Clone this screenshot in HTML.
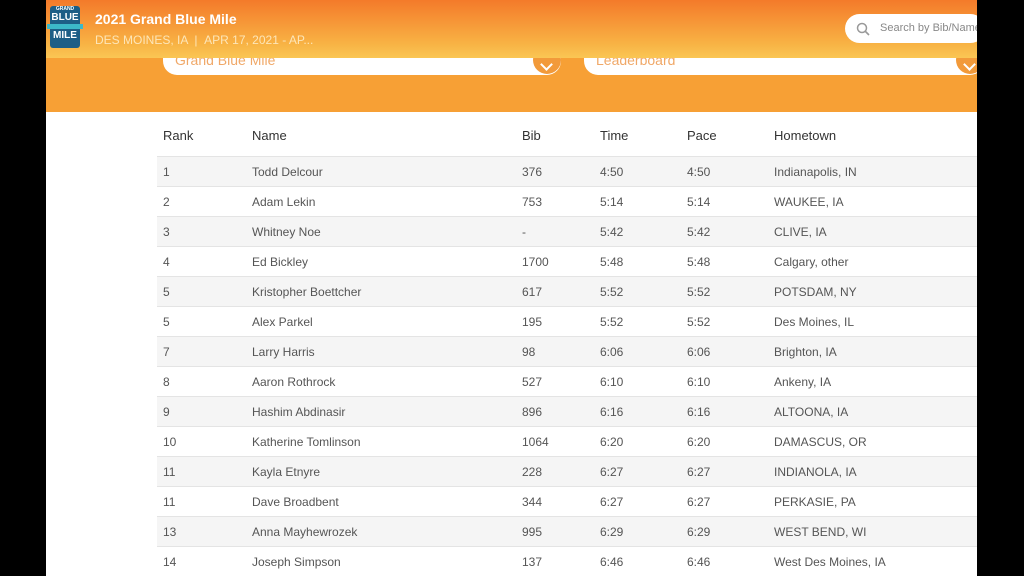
<!DOCTYPE html>
<html><head><meta charset="utf-8"><style>
body{margin:0;width:1024px;height:576px;background:#000;overflow:hidden;font-family:"Liberation Sans",sans-serif;position:relative}
.page{position:absolute;left:46px;top:0;width:931px;height:576px;background:#fff;overflow:hidden}
.band{position:absolute;left:0;top:0;width:931px;height:112px;background:#f7a035}
.hdr{position:absolute;left:0;top:0;width:931px;height:58px;background:linear-gradient(#f47a2a,#f8b244 75%,#fac654)}
.dd{position:absolute;top:40px;height:35px;background:#fff;border-radius:14px;color:#f0a868;font-size:14px}
.dd span{position:absolute;left:12px;top:12px}
.dd i{position:absolute;right:0;top:6px;width:28px;height:28px;border-radius:50%;background:#f29a3a}
.dd i:after{content:"";position:absolute;left:9px;top:14px;width:7px;height:7px;border-right:2px solid #fff;border-bottom:2px solid #fff;transform:rotate(45deg)}
.logo{position:absolute;left:4px;top:6px;width:30px;height:42px;background:#1d5e86;border-radius:3px;color:#fff;font-weight:bold;font-size:10px;text-align:center;line-height:11px}
.title{position:absolute;left:49px;top:11px;color:#fff;font-size:14px;font-weight:bold}
.sub{position:absolute;left:49px;top:33px;color:#fde6b8;font-size:12px}
.search{position:absolute;left:799px;top:14px;width:140px;height:29px;background:#fff;border-radius:15px;font-size:11px;color:#888}
table{position:absolute;left:111px;top:115px;width:820px;border-collapse:collapse;font-size:12px;color:#555}
th{text-align:left;font-weight:normal;color:#333;font-size:13px;height:41px;padding:0 0 0 6px}
td{height:29px;padding:0 0 0 6px;border-top:1px solid #e4e4e4}
tr:nth-child(even) td{background:#f5f5f5}
</style></head><body><div class="page">
<div class="band"></div>
<div class="dd" style="left:117px;width:398px"><span>Grand Blue Mile</span><i></i></div>
<div class="dd" style="left:538px;width:400px"><span>Leaderboard</span><i></i></div>
<div class="hdr"></div>
<div class="logo"><div style="font-size:5px;line-height:6px">GRAND</div>BLUE<div style="background:#3cb8c8;font-size:4px;line-height:5px;margin:1px -3px">&nbsp;</div>MILE</div>
<div class="title">2021 Grand Blue Mile</div>
<div class="sub">DES MOINES, IA &nbsp;| &nbsp;APR 17, 2021 - AP...</div>
<div class="search"><svg width="14" height="14" style="position:absolute;left:11px;top:8px" viewBox="0 0 14 14"><circle cx="6" cy="6" r="4.5" fill="none" stroke="#999" stroke-width="1.5"/><path d="M9.5 9.5L13 13" stroke="#999" stroke-width="1.6"/></svg><span style="position:absolute;left:35px;top:8px">Search by Bib/Name</span></div>
<table>
<tr><th style="width:83px">Rank</th><th style="width:264px">Name</th><th style="width:72px">Bib</th><th style="width:81px">Time</th><th style="width:81px">Pace</th><th>Hometown</th></tr>
<tr><td>1</td><td>Todd Delcour</td><td>376</td><td>4:50</td><td>4:50</td><td>Indianapolis, IN</td></tr>
<tr><td>2</td><td>Adam Lekin</td><td>753</td><td>5:14</td><td>5:14</td><td>WAUKEE, IA</td></tr>
<tr><td>3</td><td>Whitney Noe</td><td>-</td><td>5:42</td><td>5:42</td><td>CLIVE, IA</td></tr>
<tr><td>4</td><td>Ed Bickley</td><td>1700</td><td>5:48</td><td>5:48</td><td>Calgary, other</td></tr>
<tr><td>5</td><td>Kristopher Boettcher</td><td>617</td><td>5:52</td><td>5:52</td><td>POTSDAM, NY</td></tr>
<tr><td>5</td><td>Alex Parkel</td><td>195</td><td>5:52</td><td>5:52</td><td>Des Moines, IL</td></tr>
<tr><td>7</td><td>Larry Harris</td><td>98</td><td>6:06</td><td>6:06</td><td>Brighton, IA</td></tr>
<tr><td>8</td><td>Aaron Rothrock</td><td>527</td><td>6:10</td><td>6:10</td><td>Ankeny, IA</td></tr>
<tr><td>9</td><td>Hashim Abdinasir</td><td>896</td><td>6:16</td><td>6:16</td><td>ALTOONA, IA</td></tr>
<tr><td>10</td><td>Katherine Tomlinson</td><td>1064</td><td>6:20</td><td>6:20</td><td>DAMASCUS, OR</td></tr>
<tr><td>11</td><td>Kayla Etnyre</td><td>228</td><td>6:27</td><td>6:27</td><td>INDIANOLA, IA</td></tr>
<tr><td>11</td><td>Dave Broadbent</td><td>344</td><td>6:27</td><td>6:27</td><td>PERKASIE, PA</td></tr>
<tr><td>13</td><td>Anna Mayhewrozek</td><td>995</td><td>6:29</td><td>6:29</td><td>WEST BEND, WI</td></tr>
<tr><td>14</td><td>Joseph Simpson</td><td>137</td><td>6:46</td><td>6:46</td><td>West Des Moines, IA</td></tr>
</table>
</div></body></html>
